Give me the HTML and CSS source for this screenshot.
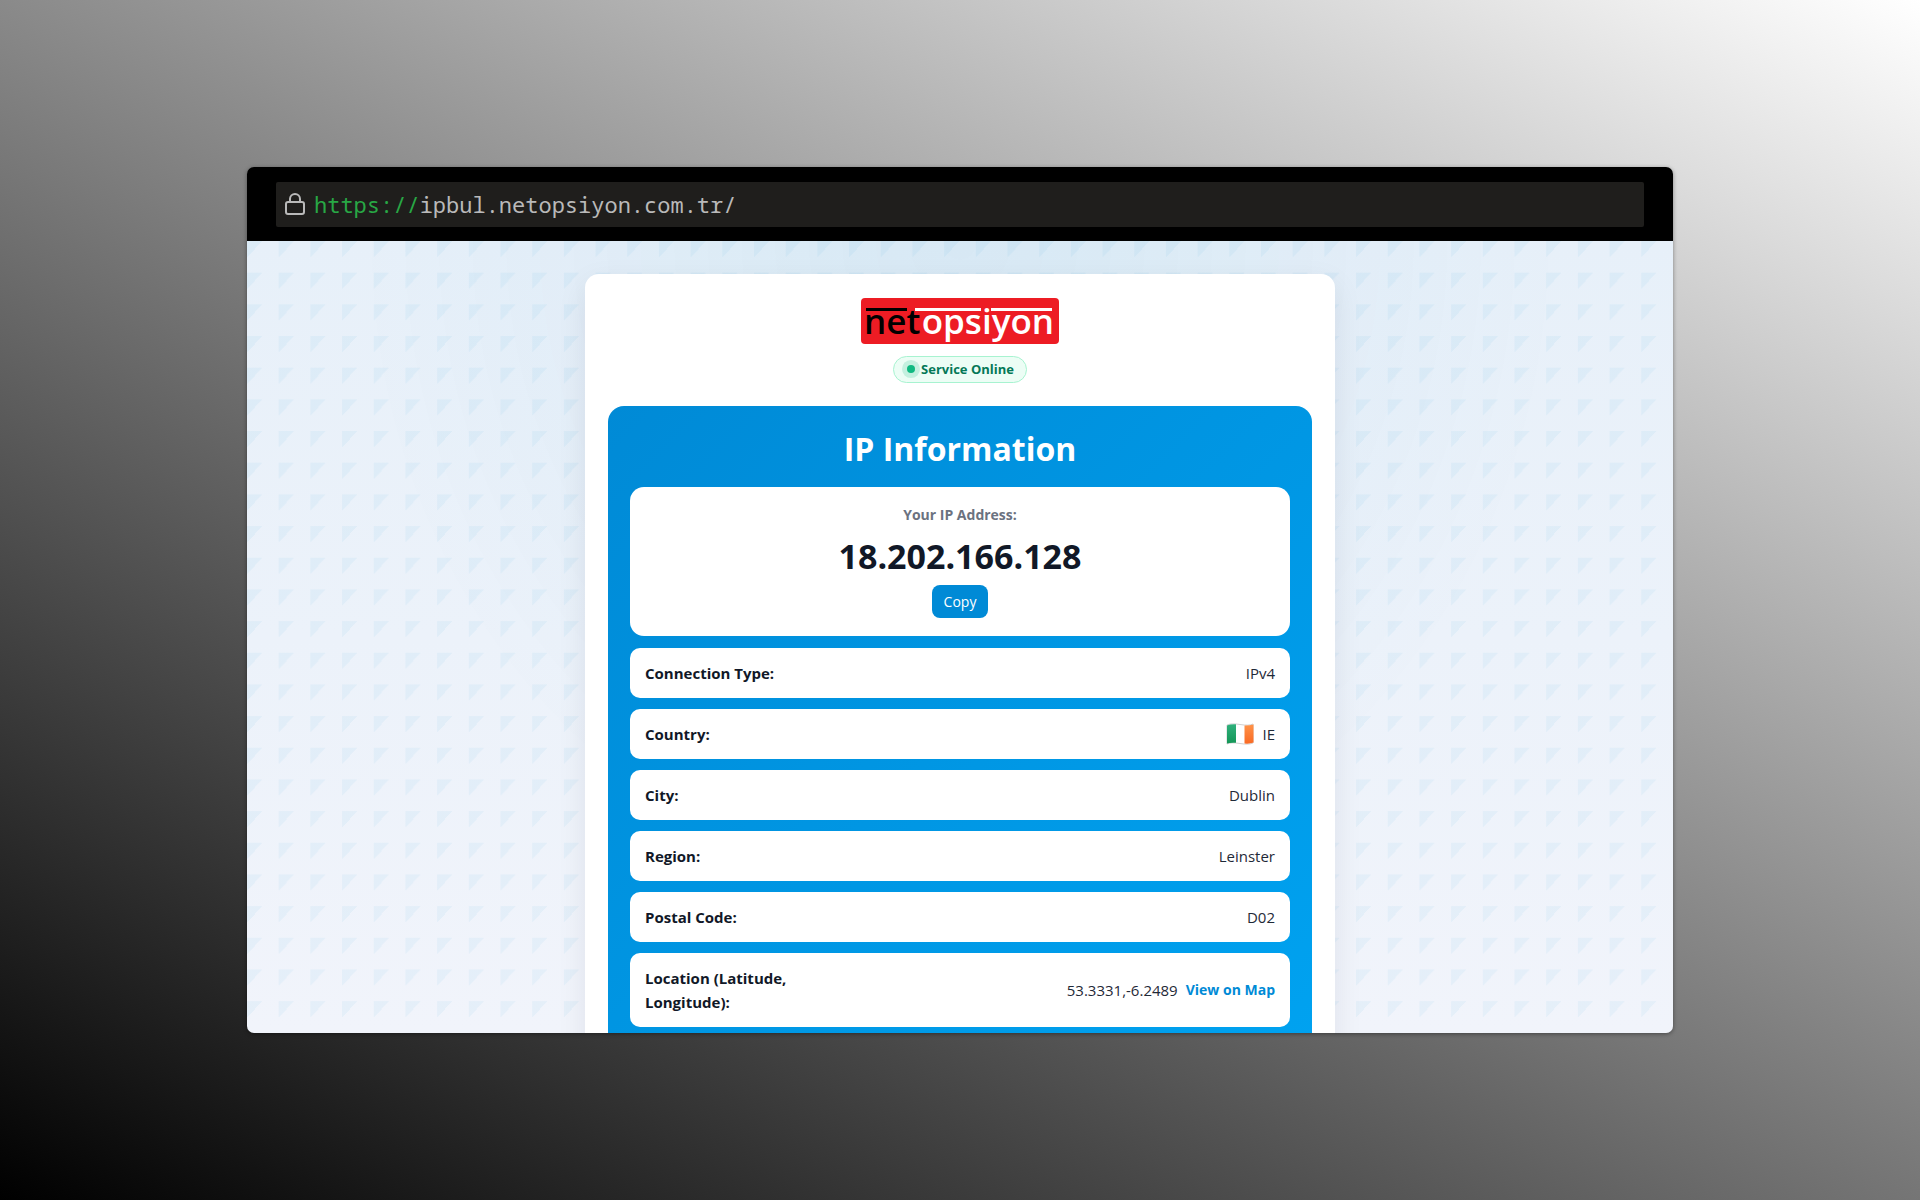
FILE: index.html
```html
<!DOCTYPE html>
<html lang="en">
<head>
    <meta charset="utf-8">
    <title>IP Information</title>
    <link rel="stylesheet" href="styles.css">
</head>
<body>
    <div class="window">
        <header class="bar">
            <div class="address">
                <svg class="lock" viewBox="0 0 22 24" fill="none" stroke="#b9b9b9" stroke-width="2">
                    <rect x="2" y="10" width="18" height="12" rx="2"/>
                    <path d="M6 10V7a5 5 0 0 1 10 0v3"/>
                </svg>
                <span class="url"><span class="scheme">https://</span>ipbul.netopsiyon.com.tr/</span>
            </div>
        </header>
        <main class="page">
            <div class="card">
                <svg class="logo" viewBox="0 0 198 46">
                    <rect width="198" height="46" rx="4" fill="#ed1c24"/>
                    <rect x="5" y="10" width="41" height="3" fill="#000"/>
                    <path d="M54 10H120V13H54ZM130 10H191V13H130Z" fill="#fff"/>
                    <text x="3" y="36" fill="#000">net</text>
                    <text x="193" y="36" fill="#fff" text-anchor="end">opsiyon</text>
                </svg>
                <div class="status"><span class="dot"></span>Service Online</div>

                <section class="panel">
                    <h1>IP Information</h1>
                    <div class="ip-box">
                        <p class="ip-label">Your IP Address:</p>
                        <p class="ip">18.202.166.128</p>
                        <button class="copy-btn" type="button">Copy</button>
                    </div>
                    <dl class="rows">
                        <div class="row"><dt>Connection Type:</dt><dd>IPv4</dd></div>
                        <div class="row">
                            <dt>Country:</dt>
                            <dd>
                                <svg class="flag" viewBox="0 0 28 22">
                                    <defs>
                                        <linearGradient id="green" x1="0" y1="0" x2="0" y2="1">
                                            <stop offset="0" stop-color="#2fb07c"/>
                                            <stop offset="1" stop-color="#149657"/>
                                        </linearGradient>
                                        <linearGradient id="orange" x1="0" y1="0" x2="0" y2="1">
                                            <stop offset="0" stop-color="#ff9248"/>
                                            <stop offset="1" stop-color="#f96a24"/>
                                        </linearGradient>
                                    </defs>
                                    <path d="M1 2Q5 0 14 1.500T27 1V20Q23 22 14 20.500T1 21Z" fill="#fff" stroke="#d0d0d0" stroke-width="1"/>
                                    <path d="M1 2.500Q4 1 10 1.300V19.800Q4 19.500 1 20.500Z" fill="url(#green)"/>
                                    <path d="M18.500 2.500Q24 2.500 27.500 1.500V19.500Q24 21 18.500 20.500Z" fill="url(#orange)"/>
                                </svg>
                                IE
                            </dd>
                        </div>
                        <div class="row"><dt>City:</dt><dd>Dublin</dd></div>
                        <div class="row"><dt>Region:</dt><dd>Leinster</dd></div>
                        <div class="row"><dt>Postal Code:</dt><dd>D02</dd></div>
                        <div class="row">
                            <dt>Location (Latitude, Longitude):</dt>
                            <dd>53.3331,-6.2489 <a class="map-link" href="#">View on Map</a></dd>
                        </div>
                    </dl>
                </section>
            </div>
        </main>
    </div>
</body>
</html>
```

FILE: styles.css
```css
* {
    box-sizing: border-box;
}

body {
    margin: 0;
    height: 100vh;
    display: flex;
    align-items: center;
    justify-content: center;
    font-family: "Open Sans", "Noto Sans", sans-serif;
    background: linear-gradient(28deg, #000, #fff);
}

.window {
    display: flex;
    flex-direction: column;
    width: 74.27%;
    height: 72.17%;
    border-radius: 7px;
    overflow: hidden;
    box-shadow: 0 1px 4px rgba(0, 0, 0, 0.4);
}

.bar {
    padding: 15px 29px 14px;
    background: #000;
}

.address {
    display: flex;
    align-items: center;
    gap: 8px;
    height: 45px;
    padding: 0 8px;
    border-radius: 2px;
    background: #1f1e1c;
}

.lock {
    width: 22px;
    height: 24px;
}

.url {
    font-family: "Noto Sans Mono", "DejaVu Sans Mono", monospace;
    font-size: 22px;
    line-height: 24px;
    color: #b9b9b9;
}

.scheme {
    color: #28a745;
}

.page {
    flex: 1;
    min-height: 0;
    overflow: hidden;
    padding: 33px 20px 0;
    background:
        linear-gradient(135deg, rgba(0, 140, 210, 0.05) 25%, transparent 25%) 0 0 / calc(100% / 45) calc(100% / 25),
        radial-gradient(ellipse at 50% 0, rgba(0, 130, 190, 0.07), transparent 60%),
        linear-gradient(180deg, #e7f0f9, #f1f4fb);
}

.card {
    display: flex;
    flex-direction: column;
    align-items: center;
    max-width: 750px;
    margin: 0 auto;
    padding: 24px 23px;
    border-radius: 14px;
    background: #fff;
    box-shadow: 0 10px 30px rgba(15, 23, 42, 0.08);
}

.logo {
    width: 198px;
    height: 46px;
    overflow: visible;
    font-size: 35px;
    font-weight: 600;
}

.status {
    display: flex;
    align-items: center;
    gap: 6px;
    height: 27px;
    margin: 12px 0 23px;
    padding: 0 12px 0 13px;
    border: 1px solid #a7f3d0;
    border-radius: 14px;
    background: #ecfdf5;
    color: #047857;
    font-size: 13px;
    font-weight: 700;
}

.dot {
    width: 8px;
    height: 8px;
    border-radius: 50%;
    background: #10b981;
    box-shadow: 0 0 0 5px rgba(16, 185, 129, 0.18);
}

.panel {
    width: 100%;
    padding: 22px;
    border-radius: 16px;
    background: linear-gradient(135deg, #008ad6, #00a2f0);
}

h1 {
    margin: 0 0 17px;
    color: #fff;
    font-size: 32px;
    line-height: 42px;
    text-align: center;
}

.ip-box {
    display: flex;
    flex-direction: column;
    align-items: center;
    height: 149px;
    padding-top: 16px;
    border-radius: 14px;
    background: #fff;
}

.ip-label {
    margin: 0;
    color: #6b7280;
    font-size: 14px;
    line-height: 24px;
    font-weight: 700;
}

.ip {
    margin: 4px 0;
    color: #111827;
    font-size: 34px;
    line-height: 50px;
    font-weight: 700;
}

.copy-btn {
    height: 33px;
    padding: 0 12px;
    border: none;
    border-radius: 8px;
    background: #008ad6;
    color: #fff;
    font-family: inherit;
    font-size: 14px;
    cursor: pointer;
}

.rows {
    display: flex;
    flex-direction: column;
    gap: 11px;
    margin: 12px 0 0;
}

.row {
    display: flex;
    align-items: center;
    justify-content: space-between;
    padding: 13px 15px;
    border-radius: 10px;
    background: #fff;
    font-size: 15px;
    line-height: 24px;
}

dt {
    max-width: 158px;
    color: #111827;
    font-weight: 700;
}

dd {
    display: flex;
    align-items: center;
    gap: 8px;
    margin: 0;
    color: #1f2937;
}

.flag {
    width: 28px;
    height: 22px;
}

.map-link {
    color: #008ad6;
    font-size: 14px;
    font-weight: 700;
    text-decoration: none;
}
```
